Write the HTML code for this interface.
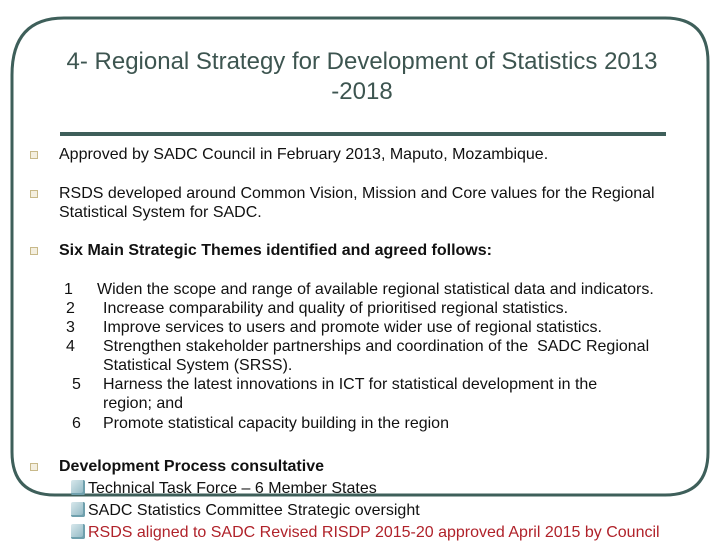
<!DOCTYPE html>
<html><head><meta charset="utf-8"><style>
body{margin:0;width:720px;height:540px;background:#fff;position:relative;overflow:hidden;font-family:"Liberation Sans",sans-serif;color:#111}
.t{position:absolute;white-space:nowrap;font-size:16px;line-height:18px}
.h{position:absolute;left:0;width:724px;text-align:center;font-size:24px;color:#3d5550;line-height:30px}
.b{position:absolute;left:30px;width:6px;height:6px;border:1px solid #c8b98a;background:#f4efe0}
.q{display:inline-block;width:14px;height:15px;background:linear-gradient(135deg,#d8e8ec,#8ab4c0);border-radius:2px;vertical-align:-2px;margin-right:3px;box-shadow:inset -2px -2px 0 #6fa0ad}
</style></head><body>
<svg width="720" height="540" style="position:absolute;left:0;top:0">
<path d="M64 18 H665 Q708 18 708 62 V452 Q708 495 665 495 H55 Q12 495 12 452 V75 Q12 18 64 18 Z" fill="none" stroke="#3e5f5a" stroke-width="3"/>
<rect x="60" y="132" width="606" height="4" fill="#3e5f5a"/>
</svg>
<div class="h" style="top:47px">4- Regional Strategy for Development of Statistics 2013</div>
<div class="h" style="top:77px">-2018</div>
<div class="b" style="top:151px"></div><div class="t" style="left:59px;top:146px">Approved by SADC Council in February 2013, Maputo, Mozambique.</div>
<div class="b" style="top:190px"></div><div class="t" style="left:59px;top:185px">RSDS developed around Common Vision, Mission and Core values for the Regional</div>
<div class="t" style="left:59px;top:204px">Statistical System for SADC.</div>
<div class="b" style="top:247px"></div><div class="t" style="left:59px;top:242px;font-weight:bold">Six Main Strategic Themes identified and agreed follows:</div>
<div class="t" style="left:64px;top:281px">1</div><div class="t" style="left:97px;top:281px">Widen the scope and range of available regional statistical data and indicators.</div>
<div class="t" style="left:66px;top:300px">2</div><div class="t" style="left:103px;top:300px">Increase comparability and quality of prioritised regional statistics.</div>
<div class="t" style="left:66px;top:319px">3</div><div class="t" style="left:103px;top:319px">Improve services to users and promote wider use of regional statistics.</div>
<div class="t" style="left:66px;top:338px">4</div><div class="t" style="left:103px;top:338px">Strengthen stakeholder partnerships and coordination of the&nbsp; SADC Regional</div>
<div class="t" style="left:103px;top:357px">Statistical System (SRSS).</div>
<div class="t" style="left:72px;top:376px">5</div><div class="t" style="left:103px;top:376px">Harness the latest innovations in ICT for statistical development in the</div>
<div class="t" style="left:103px;top:395px">region; and</div>
<div class="t" style="left:72px;top:415px">6</div><div class="t" style="left:103px;top:415px">Promote statistical capacity building in the region</div>
<div class="b" style="top:463px"></div><div class="t" style="left:59px;top:458px;font-weight:bold">Development Process consultative</div>
<div class="t" style="left:71px;top:480px"><span class="q"></span>Technical Task Force – 6 Member States</div>
<div class="t" style="left:71px;top:502px"><span class="q"></span>SADC Statistics Committee Strategic oversight</div>
<div class="t" style="left:71px;top:524px;color:#b0222a"><span class="q"></span>RSDS aligned to SADC Revised RISDP 2015-20 approved April 2015 by Council</div>
</body></html>
